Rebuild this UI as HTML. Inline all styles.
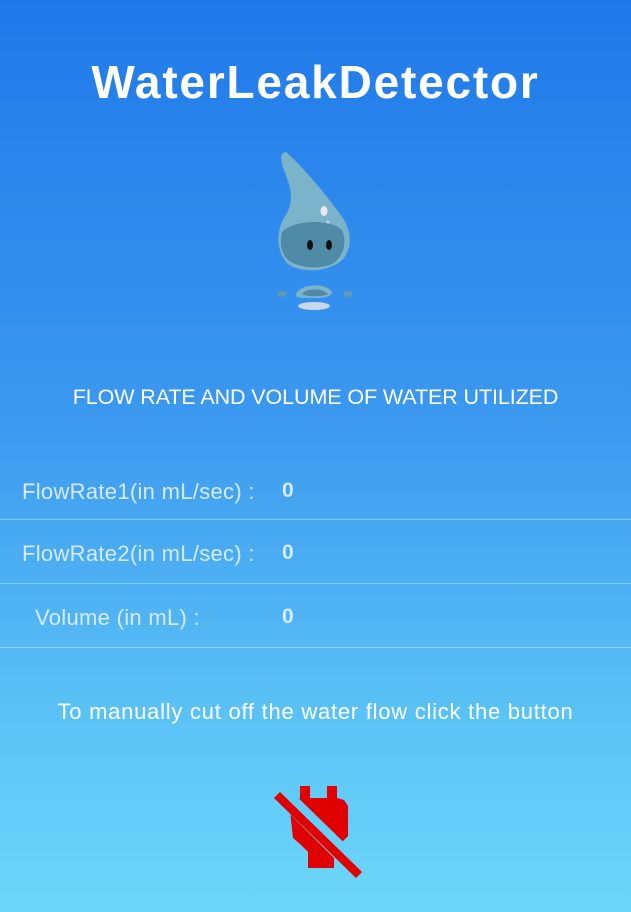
<!DOCTYPE html>
<html><head><meta charset="utf-8"><style>
html,body{margin:0;padding:0}
body{width:631px;height:912px;overflow:hidden;position:relative;font-family:"Liberation Sans",sans-serif;
background:linear-gradient(180deg,#1f79ea 0%,#3b98ef 45%,#5cc4f6 80%,#6dd7f9 100%);color:#fff}
.t{position:absolute;left:0;width:631px;text-align:center}
.title{top:55px;font-size:46px;font-weight:bold;letter-spacing:1.8px}
.h{top:385px;font-size:21.5px;letter-spacing:-0.1px}
.lab{position:absolute;font-size:22px;color:#d6ebfb;white-space:nowrap;letter-spacing:0.3px}
.val{position:absolute;left:282px;font-size:21px;font-weight:bold;color:#d6ebfb}
.line{position:absolute;left:0;width:631px;height:1px;background:rgba(255,255,255,0.35)}
.b{top:699px;font-size:22px;letter-spacing:0.75px}
</style></head><body>
<div class="t title">WaterLeakDetector</div>
<svg style="position:absolute;left:270px;top:148px" width="90" height="168" viewBox="0 0 90 168">
<path d="M16 4 C10 4 10 12 14 22 C20 38 26 52 14 70 C6 84 6 104 18 116 C32 126 62 124 74 110 C84 96 80 78 70 66 C54 44 32 18 16 4Z" fill="#7bb3cb"/>
<path d="M12 84 C22 72 60 70 72 82 C78 96 72 110 62 116 C48 122 26 120 16 110 C10 102 10 92 12 84Z" fill="#4f8aa6"/>
<ellipse cx="54" cy="63" rx="3.5" ry="5" fill="#e8e8f0"/>
<circle cx="58" cy="74" r="1.5" fill="#c8dbe8"/>
<ellipse cx="40" cy="97" rx="3" ry="5" fill="#111"/>
<ellipse cx="59" cy="97" rx="3" ry="5" fill="#111"/>
<path d="M26 146 C30 136 56 134 62 144 C62 150 50 150 42 150 C32 150 24 150 26 146Z" fill="#7bb3cb"/>
<path d="M32 146 C36 140 52 140 58 146 C52 149 36 149 32 146Z" fill="#4f8aa6"/>
<ellipse cx="12" cy="146" rx="5" ry="3" fill="#5f98b4"/>
<ellipse cx="78" cy="146" rx="5" ry="3" fill="#5f98b4"/>
<ellipse cx="44" cy="158" rx="16" ry="4" fill="#c8d8e8"/>
</svg>
<div class="t h">FLOW RATE AND VOLUME OF WATER UTILIZED</div>
<div class="lab" style="left:22px;top:479px">FlowRate1(in mL/sec) :</div><div class="val" style="top:479px">0</div>
<div class="line" style="top:519px"></div>
<div class="lab" style="left:22px;top:541px">FlowRate2(in mL/sec) :</div><div class="val" style="top:541px">0</div>
<div class="line" style="top:583px"></div>
<div class="lab" style="left:35px;top:605px">Volume (in mL) :</div><div class="val" style="top:605px">0</div>
<div class="line" style="top:647px"></div>
<div class="t b">To manually cut off the water flow click the button</div>
<svg style="position:absolute;left:260px;top:770px" width="120" height="110" viewBox="0 0 120 110">
<defs><mask id="m"><rect width="120" height="110" fill="#fff"/><path d="M8 22 L22 12 L110 98 L96 110 Z" fill="#000"/></mask></defs>
<path mask="url(#m)" d="M40 16 L50 16 L50 28 L67 28 L67 16 L77 16 L77 28 L84 30 L88 36 L88 66 L80 74 L74 74 L74 98 L48 98 L48 82 L40 74 L33 68 L30 40 L34 32 L40 28Z" fill="#e00000"/>
<path d="M14 28 L20 22 L102 102 L96 108 Z" fill="#e00000"/>
</svg>
</body></html>
